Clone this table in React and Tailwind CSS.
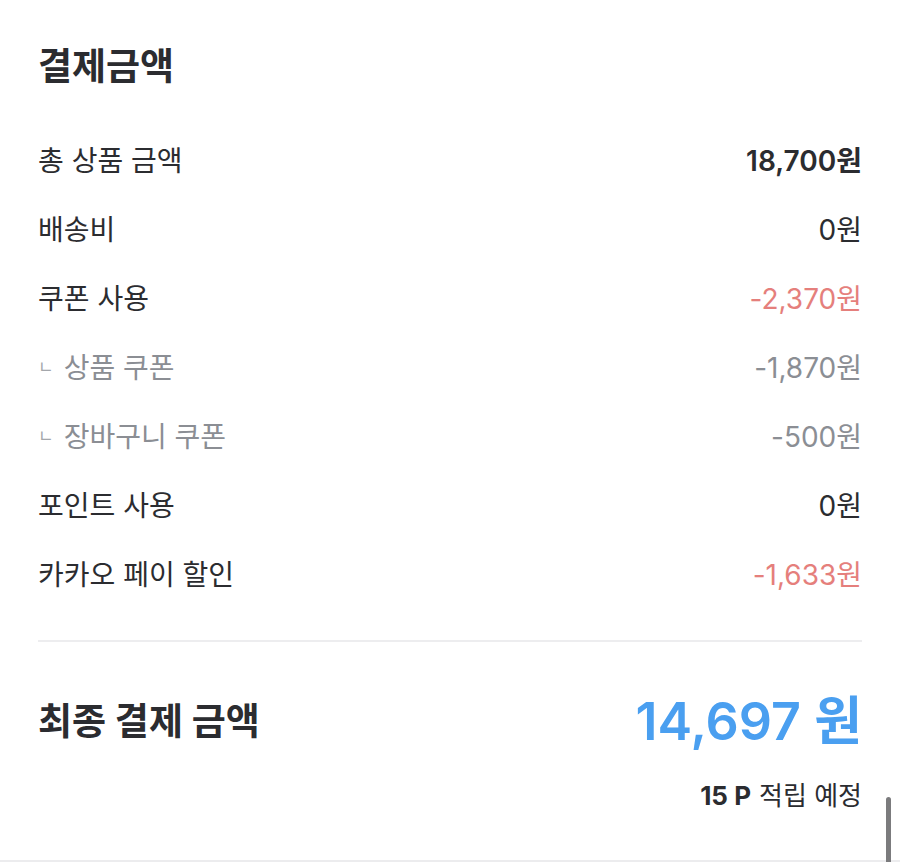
const rows = [
  { label: "총 상품 금액", value: "18,700원", tone: "bold" },
  { label: "배송비", value: "0원" },
  { label: "쿠폰 사용", value: "-2,370원", tone: "red" },
  { label: "상품 쿠폰", value: "-1,870원", sub: true },
  { label: "장바구니 쿠폰", value: "-500원", sub: true },
  { label: "포인트 사용", value: "0원" },
  { label: "카카오 페이 할인", value: "-1,633원", tone: "red" },
]

const valueClass = (row) => {
  if (row.sub) return "text-[#8b8e94]"
  if (row.tone === "red") return "text-[#e57f7c]"
  if (row.tone === "bold") return "font-semibold text-[#2b2c30]"
  return "text-[#2b2c30]"
}

const App = () => {
  return (
    <div className="relative h-[862px] w-[900px] overflow-hidden bg-white font-['Inter','Noto_Sans_CJK_KR',sans-serif]">
      <div className="px-[38px] pt-[42px]">
        <h2 className="text-[37px] font-bold leading-[50px] text-[#2b2c30]">결제금액</h2>

        <ul className="mt-[34px] flex flex-col">
          {rows.map((row) => (
            <li key={row.label} className="flex h-[69px] items-center justify-between text-[28px]">
              {row.sub ? (
                <span className="flex items-center text-[#8b8e94]">
                  <span className="mr-[10px] text-[17px] text-[#a4a7ac]">ㄴ</span>
                  {row.label}
                </span>
              ) : (
                <span className="text-[#2b2c30]">{row.label}</span>
              )}
              <span className={valueClass(row)}>{row.value}</span>
            </li>
          ))}
        </ul>

        <div className="mt-[31px] h-[2px] bg-[#ededef]" />

        <div className="mt-[52px] flex items-center justify-between">
          <span className="text-[37px] font-bold text-[#2b2c30]">최종 결제 금액</span>
          <span className="text-[52px] font-semibold leading-none text-[#4a9ff0]">14,697 원</span>
        </div>

        <div className="mt-[26px] flex justify-end text-[26px] text-[#2b2c30]">
          <span className="mr-[8px] font-bold">15 P</span>
          <span>적립 예정</span>
        </div>
      </div>

      <div className="absolute bottom-0 left-0 h-[2px] w-full bg-[#ececee]" />
      <div className="absolute right-[9px] top-[797px] h-[70px] w-[5px] rounded-full bg-[#7b7b7d]" />
    </div>
  )
}

export default App
